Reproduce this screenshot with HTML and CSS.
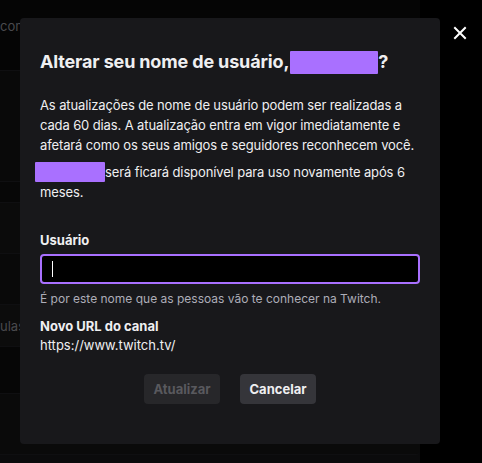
FILE: index.html
```html
<!DOCTYPE html>
<html lang="pt-BR">
<head>
    <meta charset="UTF-8">
    <meta name="viewport" content="width=device-width, initial-scale=1.0">
    <title>Alterar nome de usuário</title>
    <link rel="stylesheet" href="styles.css">
</head>
<body>
    <!-- pagina escurecida por tras do modal -->
    <div class="page">
        <div class="page-main">
            <div class="row row-top"><span class="faded">com</span></div>
            <div class="row row-a"></div>
            <div class="row row-b"></div>
            <div class="row row-c"></div>
            <div class="row row-d"></div>
            <div class="row row-e"><span class="faded">ulas</span></div>
            <div class="row row-f"></div>
            <div class="row row-g"></div>
        </div>
        <div class="page-side"></div>
    </div>

    <div class="overlay">
        <div class="modal">
            <h2 class="modal-title">Alterar seu nome de usuário,<span class="redacted redacted-title"></span>?</h2>
            <p class="modal-text">As atualizações de nome de usuário podem ser realizadas a cada 60 dias. A atualização entra em vigor imediatamente e afetará como os seus amigos e seguidores reconhecem você.</p>
            <p class="modal-text second"><span class="redacted redacted-inline"></span>será ficará disponível para uso novamente após 6 meses.</p>

            <label class="field-label" for="username">Usuário</label>
            <div class="input-box">
                <span class="caret"></span>
                <input id="username" type="text">
            </div>
            <p class="hint">É por este nome que as pessoas vão te conhecer na Twitch.</p>

            <div class="field-label url-label">Novo URL do canal</div>
            <div class="url">https://www.twitch.tv/</div>

            <div class="actions">
                <button class="btn btn-disabled" disabled>Atualizar</button>
                <button class="btn btn-secondary">Cancelar</button>
            </div>
        </div>

        <button class="close" aria-label="Fechar">
            <svg width="14" height="14" viewBox="0 0 14 14">
                <path d="M2 2 L12 12 M12 2 L2 12" stroke="#fff" stroke-width="2" stroke-linecap="square"/>
            </svg>
        </button>
    </div>
</body>
</html>
```

FILE: styles.css
```css
body {
    margin: 0;
    font-family: Inter, "Noto Sans", sans-serif;
    background-color: #000;
    color: #efeff1;
    height: 463px;
    overflow: hidden;
}

.page {
    display: flex;
    height: 463px;
}

.page-main {
    width: 420px;
    background-color: #0b0b0c;
    display: flex;
    flex-direction: column;
}

.page-side {
    flex: 1;
    background-color: #000;
}

.row {
    border-bottom: 1px solid #0f0f11;
}

.row-top {
    height: 71px;
    background-color: #050505;
    padding-top: 15px;
    box-sizing: border-box;
}

.row-a { height: 110px; background-color: #090909; }
.row-b { height: 20px; background-color: #070707; }
.row-c { height: 50px; background-color: #0b0b0b; }
.row-d { height: 50px; background-color: #090909; }
.row-e { height: 42px; background-color: #0c0c0c; padding-top: 10px; box-sizing: border-box; }
.row-f { height: 46px; background-color: #060606; }
.row-g { flex: 1; background-color: #0a0a0a; border-radius: 0 0 4px 0; margin-bottom: 8px; }

.faded {
    color: #4a4a4e;
    font-size: 13px;
}

.overlay {
    position: fixed;
    inset: 0;
}

.modal {
    position: absolute;
    left: 20px;
    top: 18px;
    width: 420px;
    height: 426px;
    box-sizing: border-box;
    padding: 32px 20px 0 20px;
    background-color: #18181b;
    border-radius: 4px;
}

.modal-title {
    margin: 0 0 21px 0;
    font-size: 18px;
    font-weight: 700;
    line-height: 24px;
    letter-spacing: -0.15px;
    display: flex;
    align-items: center;
}

.redacted {
    display: inline-block;
    background-color: #a970ff;
    border-radius: 1px;
}

.redacted-title {
    width: 88px;
    height: 23px;
    margin-left: 1px;
}

.modal-text {
    margin: 0;
    font-size: 13px;
    line-height: 20px;
    letter-spacing: -0.12px;
}

.modal-text.second {
    margin-top: 7px;
}

.redacted-inline {
    width: 70px;
    height: 20px;
    margin-left: -5px;
    vertical-align: top;
}

.field-label {
    display: block;
    margin-top: 29px;
    font-size: 13px;
    font-weight: 700;
    line-height: 18px;
}

.input-box {
    margin-top: 5px;
    height: 30px;
    box-sizing: border-box;
    border: 2px solid #a970ff;
    border-radius: 4px;
    background-color: #000;
    display: flex;
    align-items: center;
    padding-left: 10px;
}

.caret {
    width: 1px;
    height: 16px;
    background-color: #fff;
}

.input-box input {
    flex: 1;
    background: transparent;
    border: 0;
    outline: 0;
    color: #efeff1;
}

.hint {
    margin: 6px 0 0 0;
    font-size: 12px;
    line-height: 17px;
    color: #adadb8;
}

.url-label {
    margin-top: 10px;
}

.url {
    font-size: 13px;
    line-height: 20px;
}

.actions {
    display: flex;
    justify-content: center;
    gap: 20px;
    margin-top: 19px;
}

.btn {
    width: 76px;
    height: 30px;
    border: 0;
    border-radius: 4px;
    font-family: Inter, "Noto Sans", sans-serif;
    font-size: 13px;
    font-weight: 700;
}

.btn-disabled {
    background-color: #27272a;
    color: #59595e;
}

.btn-secondary {
    background-color: #35353a;
    color: #efeff1;
}

.close {
    position: absolute;
    left: 453px;
    top: 26px;
    width: 14px;
    height: 14px;
    padding: 0;
    border: 0;
    background: transparent;
}

.close svg {
    display: block;
}
```
